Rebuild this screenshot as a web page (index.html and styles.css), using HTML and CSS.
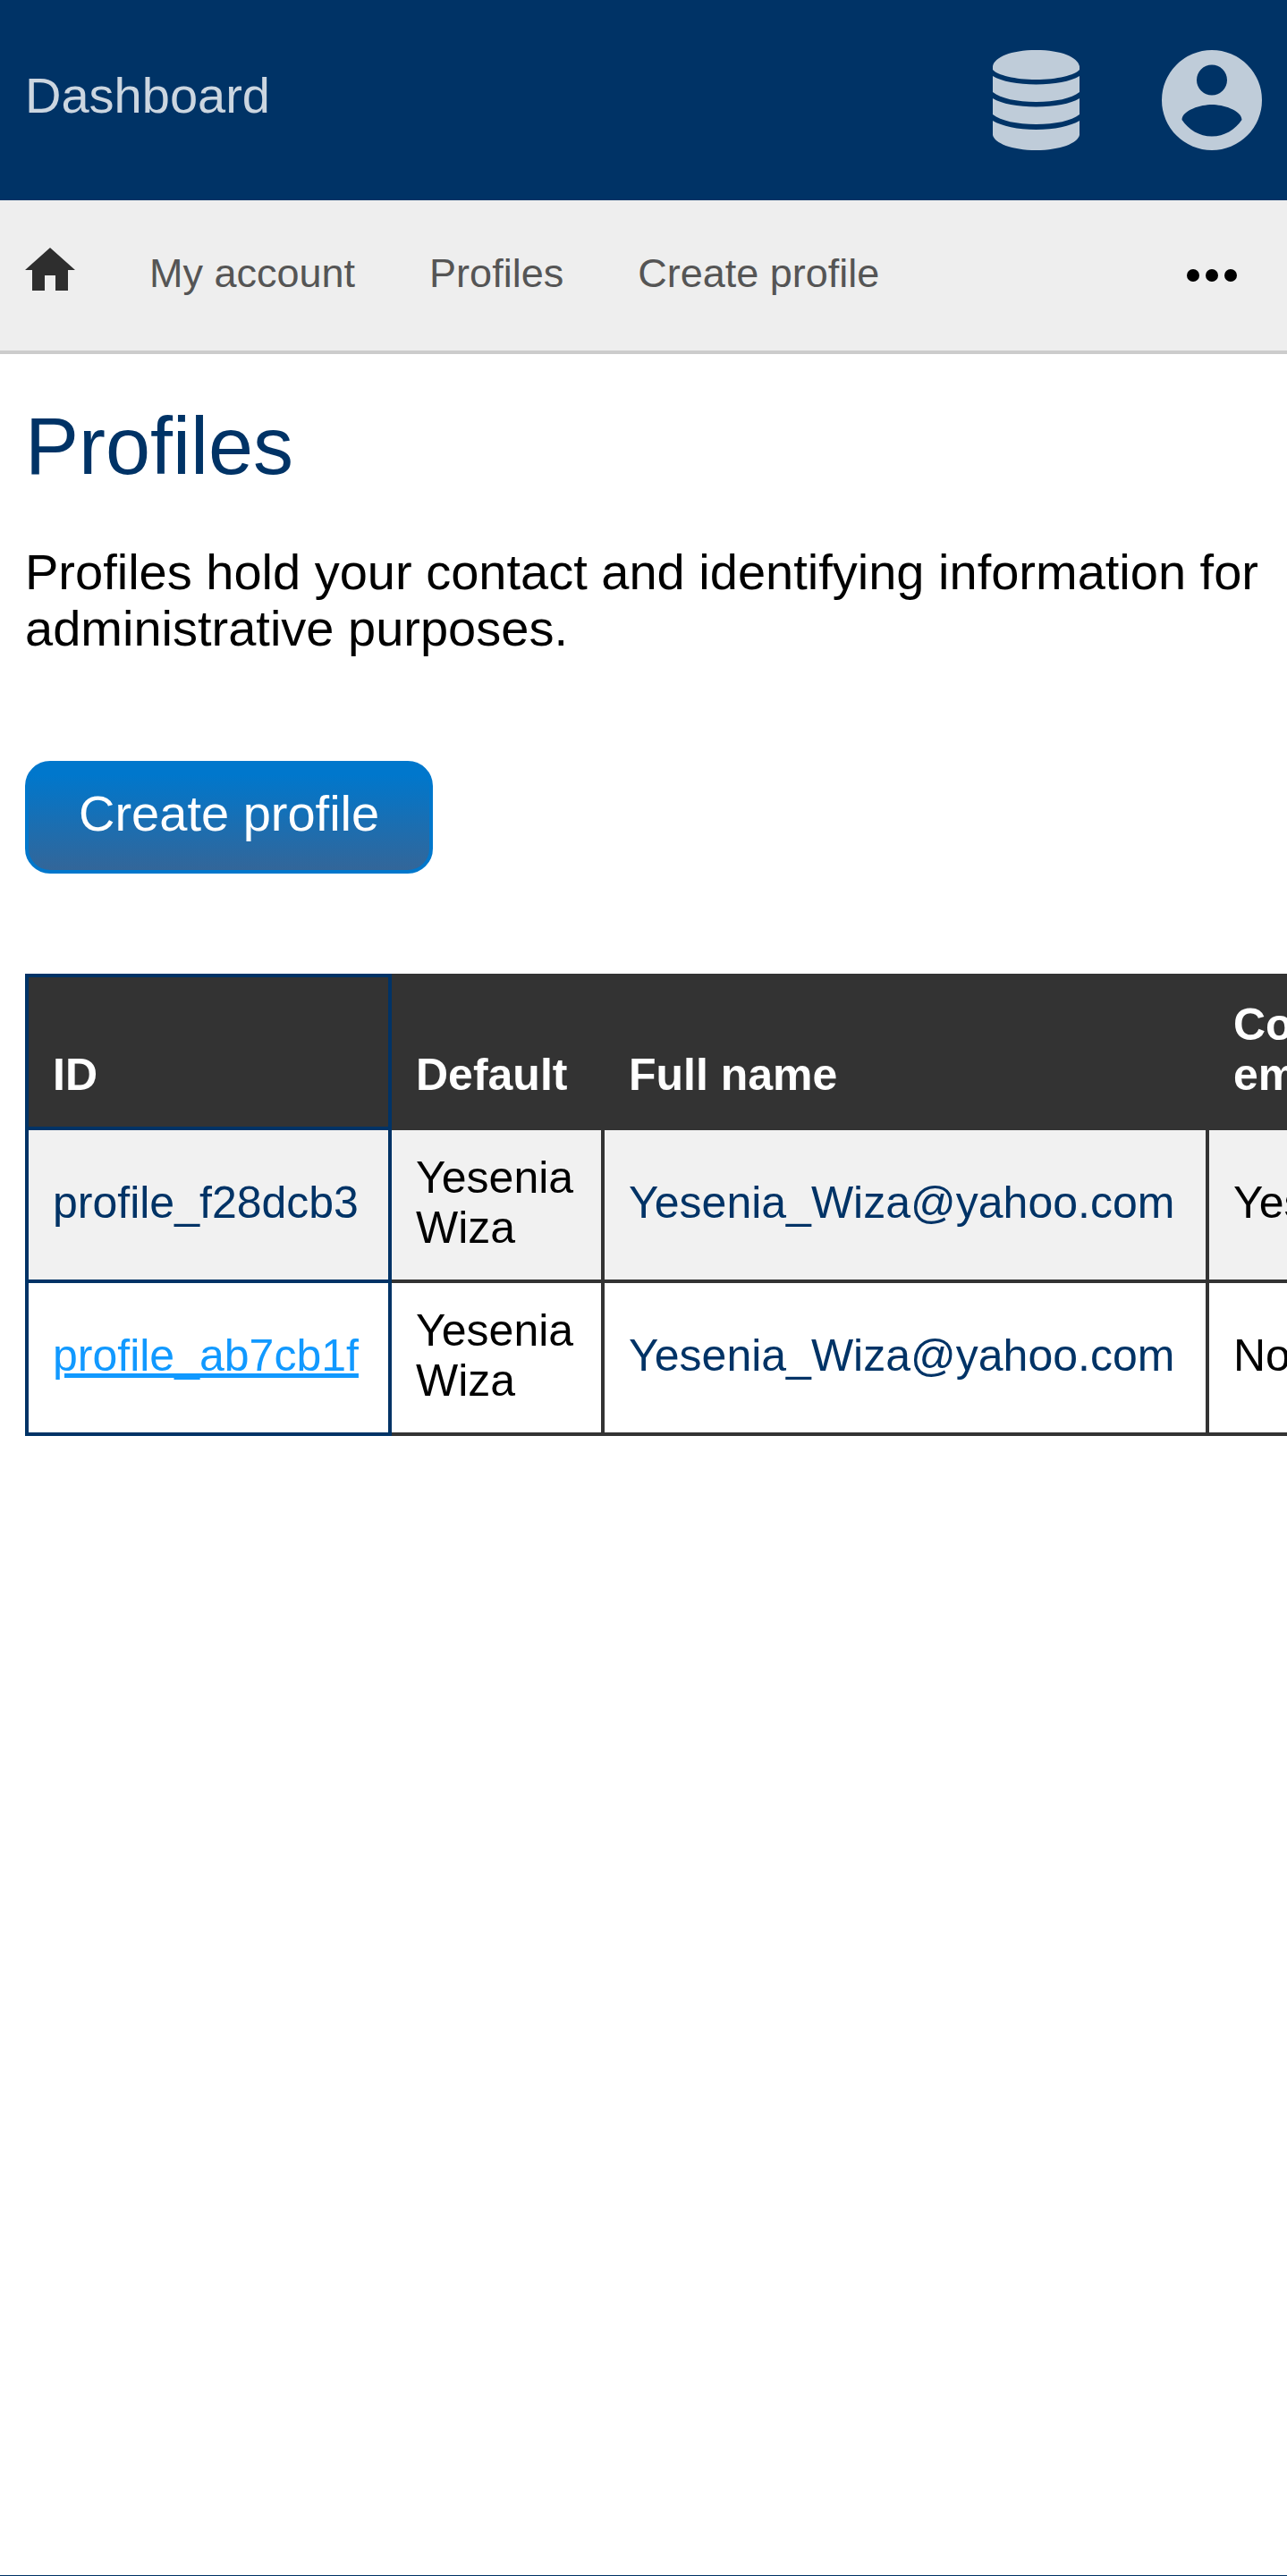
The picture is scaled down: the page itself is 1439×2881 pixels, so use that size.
FILE: index.html
```html
<!DOCTYPE html>
<html lang="en">
<head>
<meta charset="utf-8">
<title>Profiles</title>
<meta name="viewport" content="width=device-width">
<link rel="stylesheet" href="styles.css">
</head>
<body>
<header class="topbar">
  <a class="brand" href="#">Dashboard</a>
  <div class="topbar-actions">
    <a class="icon-link" href="#" aria-label="Data">
      <svg class="icon-data" viewBox="0 0 97 112" aria-hidden="true"><path d="M0 18C2 8 20 0 48.500 0S95 8 97 18V22C92 28 72 33 48.500 33S5 28 0 22ZM0 29C10 35 28 38.500 48.500 38.500S87 35 97 29V47C88 54 70 58 48.500 58S9 54 0 47ZM0 54C10 60 28 63.500 48.500 63.500S87 60 97 54V72C88 79 70 83 48.500 83S9 79 0 72ZM0 79C10 85 28 89 48.500 89S87 85 97 79V95C95 104 76 112 48.500 112S2 104 0 95Z"/></svg>
    </a>
    <a class="icon-link" href="#" aria-label="Account">
      <svg class="icon-account" viewBox="0 0 112 112" aria-hidden="true"><path fill-rule="evenodd" d="M56 0A56 56 0 1 0 56 112A56 56 0 1 0 56 0ZM56 16.500A17 17 0 1 1 56 50.500A17 17 0 1 1 56 16.500ZM22.500 78C23 67 44 61 56 61S89 67 89.500 78C82 89 70 96.500 56 96.500S30 89 22.500 78Z"/></svg>
    </a>
  </div>
</header>
<nav class="tabs" aria-label="Account">
  <a class="home" href="#" aria-label="Home"><svg class="icon-home" viewBox="0 0 56 48" aria-hidden="true"><path d="M28 0L56 25H48V48H34V31H22V48H8V25H0Z"/></svg></a>
  <a class="tab" href="#">My account</a>
  <a class="tab" href="#">Profiles</a>
  <a class="tab" href="#">Create profile</a>
  <button class="more" type="button" aria-label="More"><svg class="icon-more" viewBox="0 0 56 14" aria-hidden="true"><circle cx="7" cy="7" r="7"/><circle cx="28" cy="7" r="7"/><circle cx="49" cy="7" r="7"/></svg></button>
</nav>
<main class="content">
  <h1 class="title">Profiles</h1>
  <p class="intro">Profiles hold your contact and identifying information for administrative purposes.</p>
  <button class="create" type="button">Create profile</button>
  <div class="table-wrap">
    <table class="profiles">
      <thead>
        <tr><th class="col-id" scope="col">ID</th><th class="col-default" scope="col">Default</th><th class="col-name" scope="col">Full name</th><th class="col-email" scope="col">Contact email</th></tr>
      </thead>
      <tbody>
        <tr><td class="col-id"><a class="id-link" href="#">profile_f28dcb3</a></td><td>Yesenia Wiza</td><td><a class="mail-link" href="#">Yesenia_Wiza@yahoo.com</a></td><td>Yes</td></tr>
        <tr><td class="col-id"><a class="id-link active" href="#">profile_ab7cb1f</a></td><td>Yesenia Wiza</td><td><a class="mail-link" href="#">Yesenia_Wiza@yahoo.com</a></td><td>No</td></tr>
      </tbody>
    </table>
  </div>
</main>
<footer class="footer"></footer>
</body>
</html>
```
FILE: styles.css
```css
* { box-sizing: border-box; }

body {
  margin: 0;
  min-height: 100vh;
  display: flex;
  flex-direction: column;
  background: #fff;
  color: #000;
  font-family: "Liberation Sans", Arial, sans-serif;
  font-size: 56px;
  line-height: 63px;
}

a { color: inherit; text-decoration: none; }
svg { display: block; }
button { font: inherit; cursor: pointer; }

.topbar {
  display: flex;
  align-items: center;
  justify-content: space-between;
  padding: 56px 28px;
  background: #003366;
  color: #bfccd9;
}
.brand { padding-bottom: 12px; color: #ccd6e0; }
.topbar-actions { display: flex; gap: 92px; }
.icon-data { width: 97px; height: 112px; fill: currentColor; }
.icon-account { width: 112px; height: 112px; fill: currentColor; }

.tabs {
  display: flex;
  align-items: center;
  gap: 83px;
  padding: 56px 28px;
  background: #eee;
  border-bottom: 4px solid #ccc;
  color: #555;
  font-size: 45px;
  line-height: 52px;
}
.tab { padding-bottom: 4px; }
.home { color: #2e2e2e; padding-bottom: 14px; margin: -3px 0; }
.icon-home { width: 56px; height: 48px; fill: currentColor; }
.more {
  margin-left: auto;
  padding: 14px 28px;
  border: 0;
  background: none;
  color: #000;
}
.icon-more { width: 56px; height: 14px; fill: currentColor; }

.content { flex: 1; padding: 52px 0 56px 28px; }
.title {
  margin: 0 0 58px;
  color: #003366;
  font-size: 90px;
  font-weight: 400;
  line-height: 102px;
}
.intro { margin: 0 28px 117px 0; }
.create {
  display: block;
  padding: 23px 56px 32px;
  border: 4px solid #0077cc;
  border-radius: 28px;
  background: linear-gradient(#0077cc 10%, #336699);
  color: #fff;
}

.table-wrap { margin-top: 112px; overflow: hidden; }
.profiles {
  width: 1700px;
  table-layout: fixed;
  border-collapse: collapse;
  font-size: 50px;
  line-height: 56px;
}
.profiles th,
.profiles td {
  padding: 25px 27px 30px;
  border: 4px solid #333;
  text-align: left;
}
.profiles th {
  background: #333;
  color: #fff;
  vertical-align: bottom;
}
.profiles .col-id { width: 406px; border-color: #003366; }
.col-default { width: 238px; }
.col-name { width: 676px; }
.profiles tbody tr:nth-child(odd) { background: #f1f1f1; }
.id-link,
.mail-link { color: #003366; }
.id-link.active { color: #1199ff; text-decoration: underline; }

.footer { border-top: 1px solid #003366; }
```
